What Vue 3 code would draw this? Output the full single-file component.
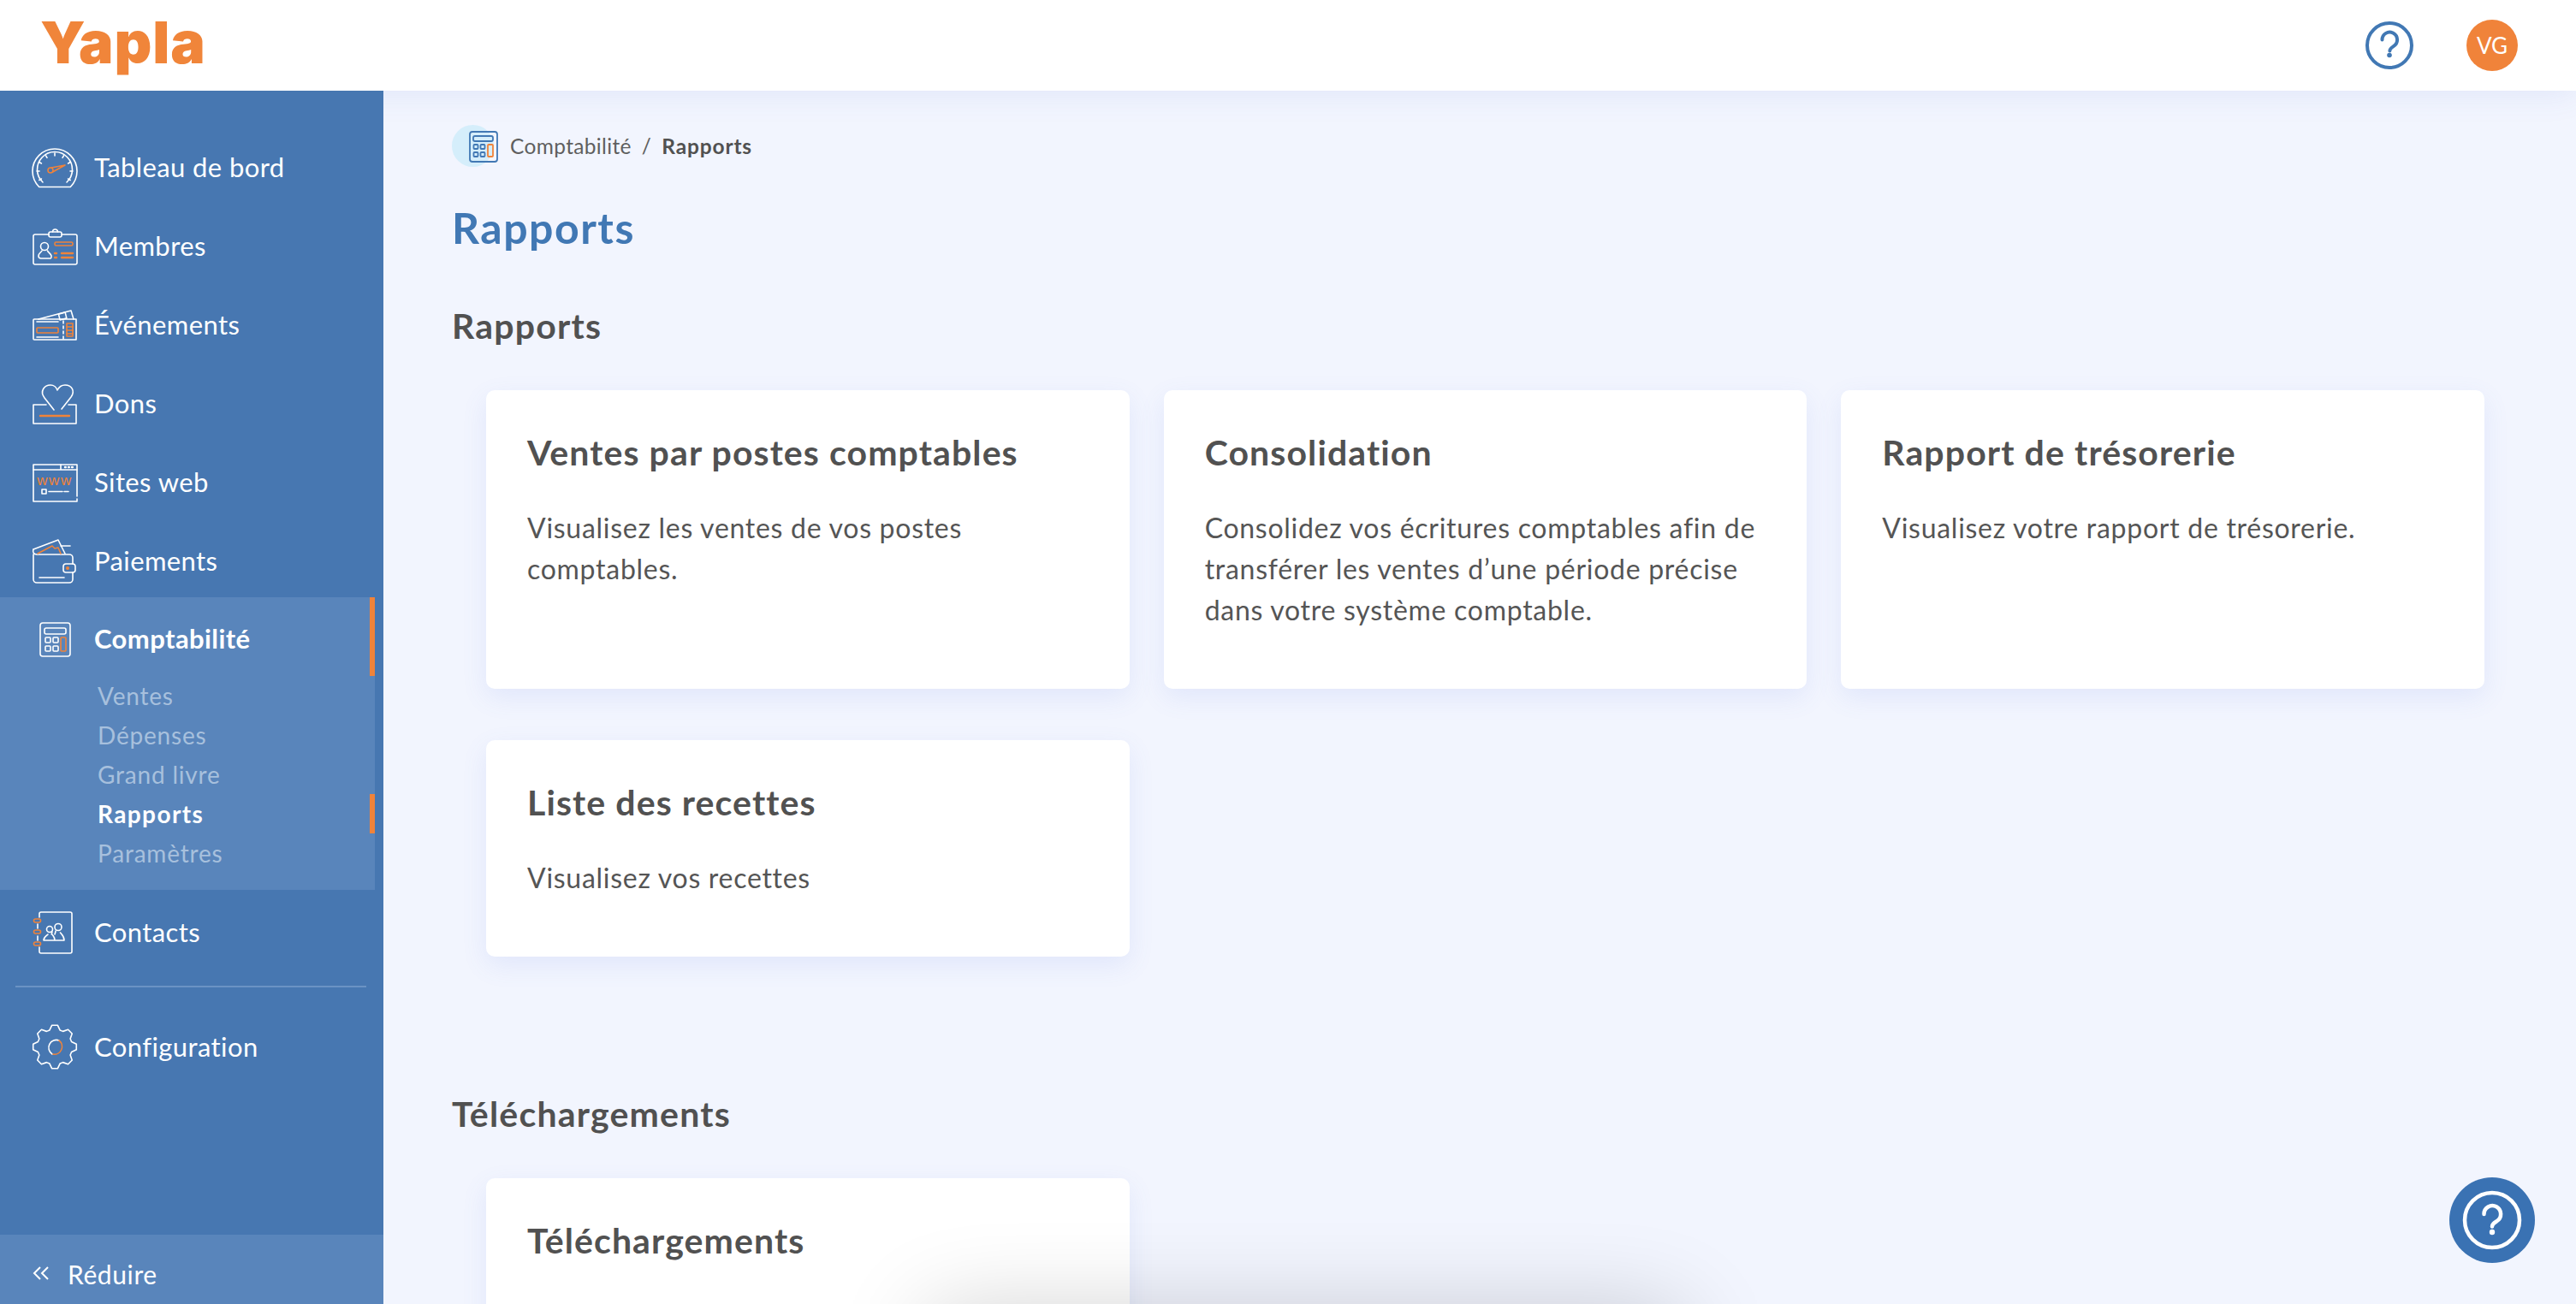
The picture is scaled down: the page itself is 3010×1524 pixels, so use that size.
<script setup>
const navTop = [
  { key: 'dash', label: 'Tableau de bord' },
  { key: 'members', label: 'Membres' },
  { key: 'events', label: 'Événements' },
  { key: 'gifts', label: 'Dons' },
  { key: 'sites', label: 'Sites web' },
  { key: 'pay', label: 'Paiements' }
]
const subItems = [
  { label: 'Ventes' },
  { label: 'Dépenses' },
  { label: 'Grand livre' },
  { label: 'Rapports', active: true },
  { label: 'Paramètres' }
]
const reports = [
  { title: 'Ventes par postes comptables', text: 'Visualisez les ventes de vos postes comptables.' },
  { title: 'Consolidation', text: 'Consolidez vos écritures comptables afin de transférer les ventes d’une période précise dans votre système comptable.' },
  { title: 'Rapport de trésorerie', text: 'Visualisez votre rapport de trésorerie.' },
  { title: 'Liste des recettes', text: 'Visualisez vos recettes' }
]
const gearPath = (() => {
  const pts = []
  for (let i = 0; i < 8; i++) {
    const t = (i * Math.PI) / 4 - Math.PI / 2
    const p = (r, a) => `${(26 + r * Math.cos(t + a)).toFixed(2)} ${(26.5 + r * Math.sin(t + a)).toFixed(2)}`
    pts.push(p(20.5, -0.3), p(25.5, -0.13), p(25.5, 0.13), p(20.5, 0.3))
  }
  return 'M' + pts.join(' L') + ' Z'
})()
const ticks = [-120, -90, -60, -30, 0, 30, 60, 90, 120].map((a) => {
  const r = ((a - 90) * Math.PI) / 180
  return {
    x1: 26 + 21 * Math.cos(r), y1: 31 + 21 * Math.sin(r),
    x2: 26 + 18 * Math.cos(r), y2: 31 + 18 * Math.sin(r)
  }
})
</script>

<template>
  <div class="app">
    <header class="topbar">
      <div class="logo">Yapla</div>
      <div class="top-actions">
        <svg class="top-help" viewBox="-30 -30 60 60">
          <circle r="26" class="q-ring" />
          <path class="q-mark" d="M-8.5-6.5a8.8 8.8 0 1 1 13.5 7.4c-3 2-4.600 3-4.600 5.600" />
          <circle cy="11.500" r="2.800" class="q-dot" />
        </svg>
        <div class="avatar">VG</div>
      </div>
    </header>

    <div class="body">
      <aside class="sidebar">
        <nav class="nav">
          <a v-for="item in navTop" :key="item.key" class="nav-row">
            <svg class="ico" viewBox="0 0 52 52">
              <g v-if="item.key === 'dash'">
                <path d="M7.700 49.500A26 26 0 1 1 44.300 49.500Z" />
                <path d="M12 44A20.500 20.500 0 1 1 40 44" />
                <line v-for="(t, i) in ticks" :key="i" :x1="t.x1" :y1="t.y1" :x2="t.x2" :y2="t.y2" />
                <circle class="or" cx="21" cy="30" r="3" />
                <path class="or" d="M22 27 38 24 23.500 32" />
              </g>
              <g v-else-if="item.key === 'members'">
                <path d="M19 13H3a2 2 0 0 0-2 2V46a2 2 0 0 0 2 2H50a2 2 0 0 0 2-2V15a2 2 0 0 0-2-2H34" />
                <rect x="19" y="10" width="15" height="6" rx="2" />
                <path d="M23.500 10a3 3 0 0 1 6 0" />
                <circle cx="14" cy="27" r="4.500" />
                <path d="M11 32c-1 2-4 3-4 6 0 2 1 3 3 3h11c1 0 1-2 1-3-1-3-4-4-4.500-6" />
                <rect class="or" x="26" y="22" width="21" height="4" rx="1.500" />
                <path class="or thick" d="M26 35h2M34 35H47M26 40h2M34 40H47" />
              </g>
              <g v-else-if="item.key === 'events'">
                <path d="M7 20 45 10 48 20" />
                <rect x="31" y="13" width="8" height="7" transform="rotate(-14 35 16)" />
                <path d="M36 20H2a1 1 0 0 0-1 1V43a1 1 0 0 0 1 1H36M36 20H51V44H36" />
                <path d="M36 22v3M36 28v3M36 34v3M36 40v3" />
                <rect class="or" x="5" y="30" width="25" height="6" rx="1" />
                <rect class="or" x="40" y="25" width="7" height="15" />
                <path class="or" d="M40 29h7M40 33h7M40 37h7" />
                <path d="M5 23H30M5 41H30" />
              </g>
              <g v-else-if="item.key === 'gifts'">
                <path d="M25 34 14 20C8 12 14 5 21 5 25 5 28 8 29 11 31 7 34 5 38 5 46 5 50 12 45 19L34 33" />
                <path d="M16 28H1V50H51V28H42" />
                <path class="or thick" d="M9 41H43" />
              </g>
              <g v-else-if="item.key === 'sites'">
                <path d="M52 43V6H1V49H52V46" />
                <path d="M1 12H52M33 6V12" />
                <path class="thick" d="M38 9h.800M42 9h.800M46 9h.800" />
                <text class="www" x="26" y="30" text-anchor="middle">www</text>
                <rect x="11" y="35" width="5" height="5" />
                <path d="M19 37.500H35M37 37.500H42" />
              </g>
              <g v-else-if="item.key === 'pay'">
                <path d="M1 13 30 2 38 18" />
                <path d="M1 13c-1 3 0 6 4 6H43a4 4 0 0 1 4 4v7M47 40v8a4 4 0 0 1-4 4H5a4 4 0 0 1-4-4V19" />
                <path d="M33 9H44" />
                <path class="or" d="M6 18 23 9 26 12 30 11 33 18" />
                <rect x="36" y="30" width="14" height="10" rx="3" />
                <circle class="orf" cx="41" cy="35" r="2" />
                <path d="M8 46H37" />
              </g>
            </svg>
            <span>{{ item.label }}</span>
          </a>

          <div class="group">
            <a class="nav-row current">
              <svg class="ico" viewBox="0 0 52 52">
                <rect x="9" y="10" width="35" height="39" rx="3" />
                <rect x="14" y="16" width="25" height="7" rx="2" />
                <rect x="15" y="27" width="6" height="6" rx="1" />
                <rect x="24" y="27" width="6" height="6" rx="1" />
                <rect x="15" y="37" width="6" height="6" rx="1" />
                <rect x="24" y="37" width="6" height="6" rx="1" />
                <rect class="or" x="33" y="27" width="6" height="16" rx="1" />
              </svg>
              <span class="current-label">Comptabilité</span>
            </a>
            <a v-for="sub in subItems" :key="sub.label" class="sub-row" :class="{ on: sub.active }">{{ sub.label }}</a>
          </div>

          <a class="nav-row after-group">
            <svg class="ico" viewBox="0 0 52 52">
              <path d="M8 9V5a2 2 0 0 1 2-2H44a2 2 0 0 1 2 2V49a2 2 0 0 1-2 2H10a2 2 0 0 1-2-2V44M6 17V22M6 31V36" />
              <rect class="or" x="1.500" y="11" width="8" height="4" rx="2" />
              <rect class="or" x="1.500" y="24" width="8" height="4" rx="2" />
              <rect class="or" x="1.500" y="38" width="8" height="4" rx="2" />
              <circle cx="20" cy="23" r="3.500" />
              <circle cx="30" cy="20.500" r="4" />
              <path d="M16.500 36H13c0-4 3-5 5-7M23 26c-1 3-1 3 0 3 1 2 3 3 3 7H16.500M26 36H37c0-5-3-7-4.500-9M27 25c0 2-1 3-1 4" />
            </svg>
            <span>Contacts</span>
          </a>
          <div class="rule"></div>
          <a class="nav-row">
            <svg class="ico" viewBox="0 0 52 52">
              <path :d="gearPath" />
              <path d="M31 19A9 9 0 0 0 23 35" />
              <path class="or" d="M31 19A9 9 0 0 1 24 35" />
            </svg>
            <span>Configuration</span>
          </a>
        </nav>
        <a class="reduce">
          <svg class="chev" viewBox="0 0 20 18">
            <path d="M9 1 2 8 9 15M18 1 11 8 18 15" />
          </svg>
          <span>Réduire</span>
        </a>
      </aside>

      <main class="main">
        <div class="crumbs">
          <svg class="crumb-ico" viewBox="0 0 54 49">
            <circle class="crumb-disc" cx="24.500" cy="24.500" r="24.500" />
            <rect x="21" y="8" width="32" height="35" rx="3" />
            <rect x="25" y="13" width="23" height="6" rx="2" />
            <rect x="25.500" y="23" width="5" height="5" rx="1" />
            <rect x="33.500" y="23" width="5" height="5" rx="1" />
            <rect x="25.500" y="32" width="5" height="5" rx="1" />
            <rect x="33.500" y="32" width="5" height="5" rx="1" />
            <rect class="crumb-or" x="42" y="23" width="6" height="14" rx="1" />
          </svg>
          <span class="crumb">Comptabilité</span>
          <span class="crumb sep">/</span>
          <span class="crumb strong">Rapports</span>
        </div>
        <h1 class="page-title">Rapports</h1>

        <h2 class="section">Rapports</h2>
        <div class="cards">
          <article v-for="c in reports" :key="c.title" class="card">
            <h3>{{ c.title }}</h3>
            <p>{{ c.text }}</p>
          </article>
        </div>

        <h2 class="section downloads">Téléchargements</h2>
        <div class="cards">
          <article class="card">
            <h3>Téléchargements</h3>
          </article>
        </div>
      </main>
    </div>

    <div class="bottom-glow"></div>
    <button class="fab">
      <svg viewBox="-50 -50 100 100">
        <circle r="32" class="fab-ring" />
        <path class="fab-mark" d="M-9.500-7a9.800 9.800 0 1 1 15 8.200c-3.500 2.200-5.500 3.300-5.500 6.300" />
        <circle cy="14" r="3.200" class="fab-dot" />
      </svg>
    </button>
  </div>
</template>

<style scoped>
.app {
  position: relative;
  width: 3010px;
  height: 1524px;
  overflow: hidden;
  display: flex;
  flex-direction: column;
  background: #f2f5fe;
  font-family: Lato, "Noto Sans", sans-serif;
  color: #515151;
}
.topbar {
  position: relative;
  z-index: 2;
  flex: 0 0 106px;
  display: flex;
  align-items: center;
  justify-content: space-between;
  padding: 0 68px 0 47px;
  background: #fff;
  box-shadow: 0 4px 34px rgba(70, 100, 210, 0.1);
}
.logo {
  font-family: Inter, Lato, sans-serif;
  font-size: 68px;
  line-height: 1;
  font-weight: 900;
  letter-spacing: 0.9px;
  color: #f0853a;
  margin-top: -9px;
}
.top-actions {
  display: flex;
  align-items: center;
  gap: 60px;
}
.top-help {
  width: 60px;
  height: 60px;
}
.q-ring, .q-mark {
  fill: none;
  stroke: #4178b4;
  stroke-width: 4;
}
.q-mark { stroke-linecap: round; }
.q-dot { fill: #4178b4; }
.avatar {
  width: 60px;
  height: 60px;
  border-radius: 50%;
  background: #f0833a;
  color: #fff;
  font-size: 26px;
  display: flex;
  align-items: center;
  justify-content: center;
}
.body {
  flex: 1;
  display: flex;
  min-height: 0;
}
.sidebar {
  position: relative;
  z-index: 3;
  flex: 0 0 448px;
  display: flex;
  flex-direction: column;
  background: #4777b1;
  color: #fff;
}
.nav {
  flex: 1;
  padding-top: 43px;
}
.nav-row {
  height: 92px;
  display: flex;
  align-items: center;
  gap: 20px;
  padding-left: 38px;
  font-size: 31px;
  letter-spacing: 0.4px;
}
.ico {
  width: 52px;
  height: 52px;
  flex: none;
  overflow: visible;
  fill: none;
  stroke: #fff;
  stroke-width: 1.600;
  stroke-linejoin: round;
  stroke-linecap: round;
}
.ico .or { stroke: #f0833a; }
.ico .orf { fill: #f0833a; stroke: none; }
.ico .thick { stroke-width: 2.400; }
.ico .www {
  fill: #f0833a;
  stroke: none;
  font-size: 17px;
  font-family: "Liberation Sans", sans-serif;
  letter-spacing: 1.500px;
}
.group {
  position: relative;
  width: 438px;
  margin-top: -3px;
  padding-bottom: 20px;
  background: #5985bb;
}
.current {
  font-weight: 700;
  position: relative;
  box-shadow: inset -6px 0 0 #f0833a;
}
.current-label { padding-top: 3px; }
.sub-row {
  display: flex;
  align-items: center;
  height: 46px;
  padding-left: 114px;
  font-size: 28px;
  letter-spacing: 0.8px;
  color: #a7c0dd;
}
.sub-row.on {
  color: #fff;
  font-weight: 700;
  letter-spacing: 1.4px;
  box-shadow: inset -6px 0 0 #f0833a;
}
.after-group { margin-top: 3px; }
.rule {
  height: 2px;
  margin: 17px 20px 23px 18px;
  background: #6b93c4;
}
.reduce {
  box-sizing: border-box;
  flex: 0 0 81px;
  display: flex;
  align-items: center;
  gap: 21px;
  padding: 11px 0 0 38px;
  background: #5985bb;
  font-size: 30px;
  letter-spacing: 0.6px;
}
.chev {
  width: 20px;
  height: 18px;
  fill: none;
  stroke: #fff;
  stroke-width: 2;
}
.main {
  flex: 1;
  min-width: 0;
  padding: 40px 107px 0 80px;
}
.crumbs {
  display: flex;
  align-items: center;
  height: 49px;
}
.crumb-ico {
  width: 54px;
  height: 49px;
  margin-right: 14px;
  fill: none;
  stroke: #4178b4;
  stroke-width: 1.800;
}
.crumb-disc {
  fill: #d5eefb;
  stroke: none;
}
.crumb-or { stroke: #f0833a; }
.crumb {
  font-size: 24.500px;
  letter-spacing: 0.35px;
  color: #5f5f5f;
}
.sep { margin: 0 12px; }
.strong {
  font-weight: 700;
  letter-spacing: 0.85px;
  color: #515151;
}
.page-title {
  margin: 41px 0 60px;
  font-size: 50px;
  line-height: 60px;
  font-weight: 700;
  letter-spacing: 1.5px;
  color: #4178b4;
}
.section {
  margin: 0 0 50px;
  font-size: 41px;
  line-height: 50px;
  font-weight: 700;
  letter-spacing: 1.2px;
  color: #515151;
}
.downloads { margin-top: 159px; }
.cards {
  margin-left: 40px;
  display: grid;
  grid-template-columns: repeat(3, 1fr);
  gap: 60px 40px;
}
.card {
  padding: 45px 48px 68px;
  background: #fff;
  border-radius: 10px;
  box-shadow: 0 10px 30px rgba(90, 120, 225, 0.11);
}
.card h3 {
  margin: 0 0 36px;
  font-size: 41px;
  line-height: 56px;
  font-weight: 700;
  letter-spacing: 1.1px;
  color: #515151;
}
.card p {
  margin: 0;
  font-size: 32px;
  line-height: 48px;
  letter-spacing: 0.72px;
  color: #555;
}
.bottom-glow {
  position: absolute;
  z-index: 4;
  left: 1085px;
  top: 1535px;
  width: 880px;
  height: 100px;
  box-shadow: 0 0 110px rgba(0, 0, 0, 0.2);
}
.fab {
  position: absolute;
  z-index: 5;
  right: 48px;
  bottom: 48px;
  width: 100px;
  height: 100px;
  padding: 0;
  border: 0;
  border-radius: 50%;
  background: #3a72b3;
}
.fab svg {
  display: block;
  width: 100px;
  height: 100px;
}
.fab-ring, .fab-mark {
  fill: none;
  stroke: #fff;
  stroke-width: 4.500;
}
.fab-mark { stroke-linecap: round; }
.fab-dot { fill: #fff; }
</style>

<style>
html, body { margin: 0; background: #f2f5fe; }
a { color: inherit; text-decoration: none; }
</style>
